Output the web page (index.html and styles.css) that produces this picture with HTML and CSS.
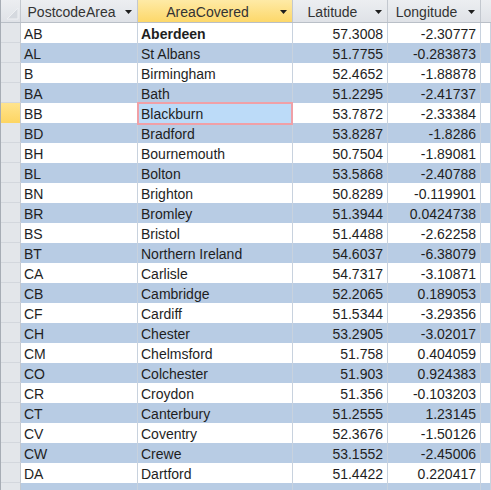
FILE: index.html
```html
<!DOCTYPE html>
<html>
<head>
<meta charset="utf-8">
<link rel="stylesheet" href="styles.css">
</head>
<body>
<div class="sheet">
  <div class="row head">
    <div class="sel corner"><svg width="19" height="22" viewBox="0 0 19 22"><polygon points="6,19 17,19 17,8" fill="#d5d9df" stroke="#eef0f3" stroke-width="1"/></svg></div>
    <div class="hcell"><span class="lbl">PostcodeArea</span><span class="arr"><svg width="7" height="5" viewBox="0 0 7 5"><polygon points="0,0 7,0 3.5,4" fill="#1e1e1e"/></svg></span></div>
    <div class="hcell active"><span class="lbl">AreaCovered</span><span class="arr"><svg width="7" height="5" viewBox="0 0 7 5"><polygon points="0,0 7,0 3.5,4" fill="#1e1e1e"/></svg></span></div>
    <div class="hcell"><span class="lbl">Latitude</span><span class="arr"><svg width="7" height="5" viewBox="0 0 7 5"><polygon points="0,0 7,0 3.5,4" fill="#1e1e1e"/></svg></span></div>
    <div class="hcell"><span class="lbl">Longitude</span><span class="arr"><svg width="7" height="5" viewBox="0 0 7 5"><polygon points="0,0 7,0 3.5,4" fill="#1e1e1e"/></svg></span></div>
    <div class="hcell filler"></div>
  </div>
  <div class="row"><div class="sel"></div><div class="cell">AB</div><div class="cell bold">Aberdeen</div><div class="cell num">57.3008</div><div class="cell num">-2.30777</div><div class="cell"></div></div>
  <div class="row"><div class="sel"></div><div class="cell">AL</div><div class="cell">St Albans</div><div class="cell num">51.7755</div><div class="cell num">-0.283873</div><div class="cell"></div></div>
  <div class="row"><div class="sel"></div><div class="cell">B</div><div class="cell">Birmingham</div><div class="cell num">52.4652</div><div class="cell num">-1.88878</div><div class="cell"></div></div>
  <div class="row"><div class="sel"></div><div class="cell">BA</div><div class="cell">Bath</div><div class="cell num">51.2295</div><div class="cell num">-2.41737</div><div class="cell"></div></div>
  <div class="row current"><div class="sel"></div><div class="cell">BB</div><div class="cell focus"><span class="txt">Blackburn</span></div><div class="cell num">53.7872</div><div class="cell num">-2.33384</div><div class="cell"></div></div>
  <div class="row"><div class="sel"></div><div class="cell">BD</div><div class="cell">Bradford</div><div class="cell num">53.8287</div><div class="cell num">-1.8286</div><div class="cell"></div></div>
  <div class="row"><div class="sel"></div><div class="cell">BH</div><div class="cell">Bournemouth</div><div class="cell num">50.7504</div><div class="cell num">-1.89081</div><div class="cell"></div></div>
  <div class="row"><div class="sel"></div><div class="cell">BL</div><div class="cell">Bolton</div><div class="cell num">53.5868</div><div class="cell num">-2.40788</div><div class="cell"></div></div>
  <div class="row"><div class="sel"></div><div class="cell">BN</div><div class="cell">Brighton</div><div class="cell num">50.8289</div><div class="cell num">-0.119901</div><div class="cell"></div></div>
  <div class="row"><div class="sel"></div><div class="cell">BR</div><div class="cell">Bromley</div><div class="cell num">51.3944</div><div class="cell num">0.0424738</div><div class="cell"></div></div>
  <div class="row"><div class="sel"></div><div class="cell">BS</div><div class="cell">Bristol</div><div class="cell num">51.4488</div><div class="cell num">-2.62258</div><div class="cell"></div></div>
  <div class="row"><div class="sel"></div><div class="cell">BT</div><div class="cell">Northern Ireland</div><div class="cell num">54.6037</div><div class="cell num">-6.38079</div><div class="cell"></div></div>
  <div class="row"><div class="sel"></div><div class="cell">CA</div><div class="cell">Carlisle</div><div class="cell num">54.7317</div><div class="cell num">-3.10871</div><div class="cell"></div></div>
  <div class="row"><div class="sel"></div><div class="cell">CB</div><div class="cell">Cambridge</div><div class="cell num">52.2065</div><div class="cell num">0.189053</div><div class="cell"></div></div>
  <div class="row"><div class="sel"></div><div class="cell">CF</div><div class="cell">Cardiff</div><div class="cell num">51.5344</div><div class="cell num">-3.29356</div><div class="cell"></div></div>
  <div class="row"><div class="sel"></div><div class="cell">CH</div><div class="cell">Chester</div><div class="cell num">53.2905</div><div class="cell num">-3.02017</div><div class="cell"></div></div>
  <div class="row"><div class="sel"></div><div class="cell">CM</div><div class="cell">Chelmsford</div><div class="cell num">51.758</div><div class="cell num">0.404059</div><div class="cell"></div></div>
  <div class="row"><div class="sel"></div><div class="cell">CO</div><div class="cell">Colchester</div><div class="cell num">51.903</div><div class="cell num">0.924383</div><div class="cell"></div></div>
  <div class="row"><div class="sel"></div><div class="cell">CR</div><div class="cell">Croydon</div><div class="cell num">51.356</div><div class="cell num">-0.103203</div><div class="cell"></div></div>
  <div class="row"><div class="sel"></div><div class="cell">CT</div><div class="cell">Canterbury</div><div class="cell num">51.2555</div><div class="cell num">1.23145</div><div class="cell"></div></div>
  <div class="row"><div class="sel"></div><div class="cell">CV</div><div class="cell">Coventry</div><div class="cell num">52.3676</div><div class="cell num">-1.50126</div><div class="cell"></div></div>
  <div class="row"><div class="sel"></div><div class="cell">CW</div><div class="cell">Crewe</div><div class="cell num">53.1552</div><div class="cell num">-2.45006</div><div class="cell"></div></div>
  <div class="row"><div class="sel"></div><div class="cell">DA</div><div class="cell">Dartford</div><div class="cell num">51.4422</div><div class="cell num">0.220417</div><div class="cell"></div></div>
  <div class="row"><div class="sel"></div><div class="cell"></div><div class="cell"></div><div class="cell num"></div><div class="cell num"></div><div class="cell"></div></div>
</div>
</body>
</html>
```

FILE: styles.css
```css
html, body {
  margin: 0;
  padding: 0;
  background: #ffffff;
}

body {
  font-family: "Liberation Sans", Arial, sans-serif;
  font-size: 14px;
  color: #1e1e1e;
  overflow: hidden;
}

.sheet {
  width: 491px;
  height: 490px;
  overflow: hidden;
  border-left: 1px solid #a7adb5;
  box-sizing: border-box;
}

.row {
  display: grid;
  grid-template-columns: 20px 117px 155px 95px 93px 1fr;
  height: 20px;
}

.row:nth-child(odd) {
  background: #b8cce4;
}

.row.head {
  height: 23px;
  background: linear-gradient(#eceef1, #dfe2e7);
  border-bottom: 1px solid #b9bfc7;
  box-sizing: border-box;
}

.sel {
  background: #e3e6ea;
  border-right: 1px solid #c3c8cf;
  border-bottom: 1px solid #d3d7dd;
  box-sizing: border-box;
}

.row.current .sel {
  background: linear-gradient(#ffe48e, #fdd562);
}

.corner {
  background: transparent;
  border-bottom: none;
  border-right: 1px solid #c3c8cf;
}

.corner svg {
  display: block;
}

.hcell {
  display: flex;
  align-items: center;
  border-right: 1px solid #c3c8cf;
  box-sizing: border-box;
  color: #333333;
  padding-top: 2px;
}

.hcell.active {
  background: linear-gradient(#feeaa6, #fdd86a);
}

.hcell .lbl {
  flex: 1;
  text-align: center;
  white-space: nowrap;
  line-height: 20px;
}

.hcell .arr {
  width: 15px;
  display: flex;
  align-items: center;
  padding-left: 3px;
  box-sizing: border-box;
}

.hcell .arr svg {
  display: block;
}

.hcell.filler {
  border-right: none;
}

.cell {
  border-right: 1px solid #c8d2de;
  box-sizing: border-box;
  padding: 1px 4px 0 3px;
  line-height: 20px;
  white-space: nowrap;
  overflow: hidden;
}

.cell.num {
  text-align: right;
}

.cell.bold {
  font-weight: bold;
}

.cell.focus {
  position: relative;
  overflow: visible;
}

.cell.focus::before {
  content: "";
  position: absolute;
  top: -1px;
  left: -1px;
  right: -1px;
  bottom: -1px;
  border: 2px solid #f0a0a7;
  background: #bcdbf8;
}

.cell.focus .txt {
  position: relative;
}
```
